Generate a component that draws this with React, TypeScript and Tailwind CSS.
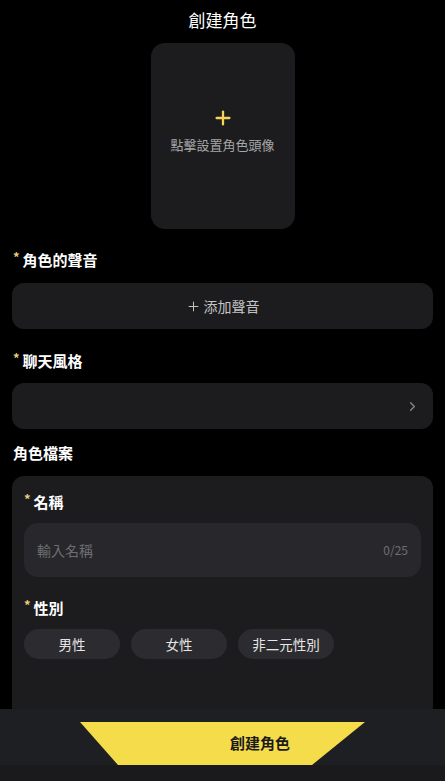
import { ChevronRight, Plus } from 'lucide-react';

const FONT = { fontFamily: '"Noto Sans CJK TC", "Noto Sans", sans-serif' };

function FieldLabel({ text, required = true }: { text: string; required?: boolean }) {
  return (
    <div className="flex items-start text-[15px] font-bold leading-[22px] text-white">
      {required && <span className="mr-[3px] mt-[1px] text-[13px] leading-[14px] text-[#e8cf7a]">*</span>}
      <span>{text}</span>
    </div>
  );
}

const genders = ['男性', '女性', '非二元性別'];

export default function App() {
  return (
    <div style={FONT} className="relative h-[781px] w-[445px] overflow-hidden bg-black">
      {/* Header */}
      <div className="flex h-[40px] items-center justify-center text-[17px] text-white">創建角色</div>

      {/* Avatar */}
      <div className="mt-[3px] flex justify-center">
        <button
          type="button"
          className="flex h-[186px] w-[144px] flex-col items-center justify-center rounded-[14px] bg-[#1c1c1f]"
        >
          <Plus className="mt-[-10px] h-[22px] w-[22px] text-[#f5d35a]" strokeWidth={2.5} />
          <span className="mt-[6px] text-[13px] text-[#a6a6a6]">點擊設置角色頭像</span>
        </button>
      </div>

      <div className="px-3">
        {/* Voice */}
        <div className="mt-[20px] pl-[1px]">
          <FieldLabel text="角色的聲音" />
        </div>
        <button
          type="button"
          className="mt-[12px] flex h-[46px] w-full items-center justify-center rounded-[12px] bg-[#1c1c1f] text-[14px] text-[#c4c4c4]"
        >
          <Plus className="mr-[3px] h-[15px] w-[15px]" strokeWidth={1.6} />
          添加聲音
        </button>

        {/* Chat style */}
        <div className="mt-[21px] pl-[1px]">
          <FieldLabel text="聊天風格" />
        </div>
        <button
          type="button"
          className="mt-[11px] flex h-[46px] w-full items-center justify-end rounded-[12px] bg-[#1c1c1f] pr-[13px]"
        >
          <ChevronRight className="h-[15px] w-[15px] text-[#8a8a8e]" strokeWidth={2} />
        </button>

        {/* Profile */}
        <div className="mt-[13px] pl-[1px] text-[15px] font-bold leading-[22px] text-white">角色檔案</div>
        <div className="mt-[12px] rounded-[12px] bg-[#1c1c1f] px-3 pb-[60px] pt-[15px]">
          <FieldLabel text="名稱" />
          <div className="mt-[10px] flex h-[54px] items-center justify-between rounded-[14px] bg-[#28282c] px-[13px]">
            <span className="text-[14px] text-[#6e6e72]">輸入名稱</span>
            <span className="text-[12px] text-[#6e6e72]">0/25</span>
          </div>

          <div className="mt-[20px]">
            <FieldLabel text="性別" />
          </div>
          <div className="mt-[10px] flex gap-[11px]">
            {genders.map((g) => (
              <button
                key={g}
                type="button"
                className="flex h-[30px] w-[96px] items-center justify-center rounded-full bg-[#2c2c30] text-[13.5px] text-[#e6e6e6]"
              >
                {g}
              </button>
            ))}
          </div>
        </div>
      </div>

      {/* Bottom action bar */}
      <div className="absolute inset-x-0 bottom-0 h-[72px] bg-[#1e1f22]">
        <div className="relative mt-[13px] h-[43px]">
          <div
            className="absolute inset-0 bg-[#f5dc4a]"
            style={{ clipPath: 'polygon(80px 0, 365px 0, 312px 100%, 118px 100%)' }}
          />
          <span className="absolute left-[230px] top-[10px] text-[15px] font-bold leading-[22px] text-[#1a1a1a]">
            創建角色
          </span>
        </div>
        <div className="h-[16px] bg-[#1a1a1c]" />
      </div>
    </div>
  );
}
